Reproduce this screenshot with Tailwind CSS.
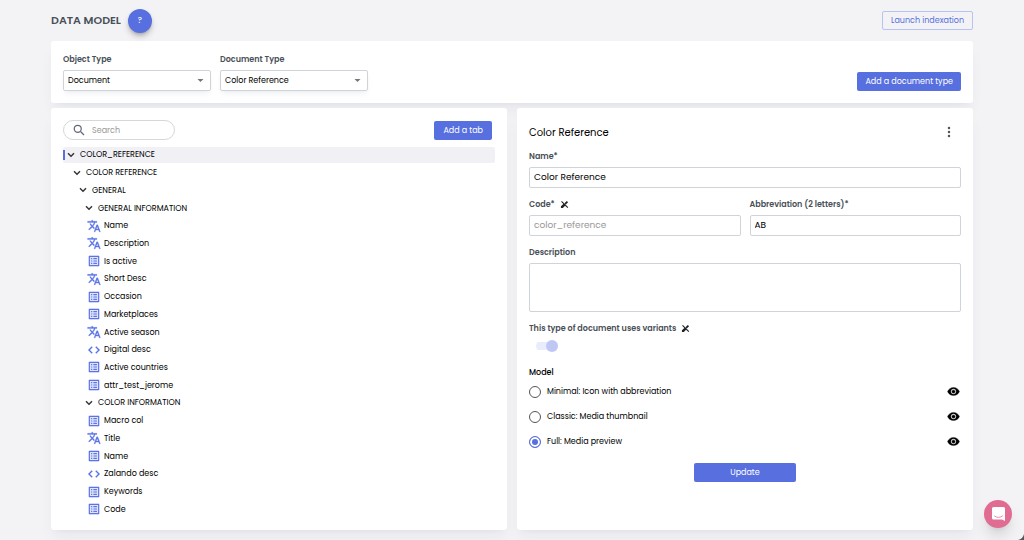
<!DOCTYPE html>
<html lang="en">

<head>
    <meta charset="UTF-8">
    <meta name="viewport" content="width=device-width, initial-scale=1.0">
    <script src="https://cdn.jsdelivr.net/npm/@tailwindcss/browser@4"></script>
    <title>Data Model</title>
</head>

<body class="bg-[#f3f3f6] font-[Poppins,Inter,sans-serif] text-[8px] leading-[13px] font-normal text-black">
    <!-- icons -->
    <svg class="hidden">
        <symbol id="chevron" viewBox="0 0 24 24"><path d="M17 7.500 12 12.500 7 7.500 5 9.500l7 7 7-7z" /></symbol>
        <symbol id="text" viewBox="0 0 24 24"><path d="M12.87 15.07l-2.54-2.51.03-.03c1.74-1.94 2.98-4.17 3.71-6.53H17V4h-7V2H8v2H1v1.99h11.17C11.5 7.92 10.44 9.75 9 11.35 8.07 10.32 7.3 9.19 6.69 8h-2c.73 1.63 1.73 3.17 2.98 4.56l-5.09 5.02L4 19l5-5 3.11 3.11.76-2.04zM18.5 10h-2L12 22h2l1.12-3h4.75L21 22h2l-4.5-12zm-2.62 7l1.62-4.33L19.12 17h-3.24z" stroke="#5b73e6" stroke-width=".5" /></symbol>
        <symbol id="list" viewBox="0 0 24 24"><path d="M3 3h18v18H3z" fill="#dfe4fb" /><path d="M19 5v14H5V5h14m1.1-2H3.9c-.5 0-.9.4-.9.9v16.200c0 .4.4.9.9.9h16.200c.4 0 .9-.5.9-.9V3.900c0-.5-.5-.9-.9-.9zM11 7h6v2h-6V7zm0 4h6v2h-6v-2zm0 4h6v2h-6zM7 7h2v2H7zm0 4h2v2H7zm0 4h2v2H7z" /></symbol>
        <symbol id="code" viewBox="0 0 24 24"><path d="M9.400 16.600 4.800 12l4.600-4.600L8 6l-6 6 6 6 1.400-1.400zm5.200 0 4.600-4.600-4.600-4.600L16 6l6 6-6 6-1.400-1.400z" stroke="#5b73e6" stroke-width=".6" /></symbol>
        <symbol id="eye" viewBox="0 0 24 24"><path d="M12 4.500C7 4.500 2.730 7.610 1 12c1.730 4.390 6 7.500 11 7.500s9.270-3.110 11-7.500c-1.730-4.390-6-7.500-11-7.500zM12 17c-2.760 0-5-2.240-5-5s2.240-5 5-5 5 2.240 5 5-2.240 5-5 5zm0-8c-1.660 0-3 1.340-3 3s1.340 3 3 3 3-1.340 3-3-1.340-3-3-3z" stroke="#000" stroke-width=".6" /></symbol>
        <symbol id="locked" viewBox="0 0 24 24"><path d="M3 4.500 5 2.500 22 19.500 20 21.500l-6.500-6.500L7.500 21.500H2.500v-5l6.500-6zM18 2.500 21.500 6l-6 6-3.500-3.500z" /></symbol>
        <symbol id="caret" viewBox="0 0 24 24"><path d="m4 8 8 8 8-8z" /></symbol>
    </svg>

    <div class="flex min-h-screen flex-col px-[51px] pb-[10px]">
        <header class="flex h-[41px] items-center justify-between">
            <div class="flex items-center gap-[7px]">
                <h1 class="text-[11px] font-semibold text-[#495057]">DATA MODEL</h1>
                <button type="button" class="size-6 rounded-full bg-[#576fdf] font-medium text-white shadow-md shadow-black/25">?</button>
            </div>
            <button type="button" class="h-[19px] rounded-[2px] border border-[#b7c2f5] px-2 text-[#576fdf]">Launch indexation</button>
        </header>

        <main class="flex flex-1 flex-col gap-[5px]">
            <section class="flex items-end justify-between rounded-[3px] bg-white p-3 shadow-lg shadow-[#12264c]/5">
                <div class="flex gap-[9px]">
                    <div class="w-[148px]">
                        <label for="objectType" class="mb-[4px] block font-semibold text-[#495057]">Object Type</label>
                        <div class="relative">
                            <select id="objectType" class="block h-[21px] w-full appearance-none rounded-[2px] border border-[#ced4da] px-1 shadow-md shadow-[#12264c]/5">
                                <option>Document</option>
                            </select>
                            <svg class="pointer-events-none absolute top-[6px] right-[6px] size-[9px] fill-[#777]"><use href="#caret" /></svg>
                        </div>
                    </div>
                    <div class="w-[148px]">
                        <label for="documentType" class="mb-[4px] block font-semibold text-[#495057]">Document Type</label>
                        <div class="relative">
                            <select id="documentType" class="block h-[21px] w-full appearance-none rounded-[2px] border border-[#ced4da] px-1 shadow-md shadow-[#12264c]/5">
                                <option>Color Reference</option>
                            </select>
                            <svg class="pointer-events-none absolute top-[6px] right-[6px] size-[9px] fill-[#777]"><use href="#caret" /></svg>
                        </div>
                    </div>
                </div>
                <button type="button" class="h-[19px] rounded-[2px] bg-[#576fdf] px-2 text-white">Add a document type</button>
            </section>

            <div class="grid flex-1 grid-cols-2 gap-[10px]">
                <section class="flex flex-col rounded-[3px] bg-white p-3 shadow-lg shadow-[#12264c]/5">
                    <div class="mb-[6px] flex items-center justify-between pr-[3px]">
                        <label for="search" class="flex h-5 w-[112px] items-center gap-[7px] rounded-full border border-[#d5d7dc] pl-[9px]">
                            <svg viewBox="0 0 24 24" class="size-3 shrink-0 fill-none stroke-[#626879] stroke-[2.500]"><circle cx="9.500" cy="9.500" r="7" /><path d="m15 15 7 7" /></svg>
                            <input id="search" type="text" placeholder="Search" aria-label="Search" class="w-full outline-none placeholder:text-[#999]">
                        </label>
                        <button type="button" class="h-[19px] rounded-[2px] bg-[#576fdf] px-[9px] text-white">Add a tab</button>
                    </div>
                    <ul id="tree" class="flex flex-1 flex-col"></ul>
                </section>

                <section class="rounded-[3px] bg-white p-3 shadow-lg shadow-[#12264c]/5">
                    <form>
                        <div class="flex h-6 items-center justify-between pr-[7px]">
                            <h2 class="text-[10px]">Color Reference</h2>
                            <button type="button" aria-label="More">
                                <svg viewBox="0 0 10 24" class="h-3 w-[10px] fill-[#555]"><circle cx="5" cy="4" r="2.500" /><circle cx="5" cy="12" r="2.500" /><circle cx="5" cy="20" r="2.500" /></svg>
                            </button>
                        </div>

                        <label for="name" class="mt-[6px] mb-[4px] block font-semibold text-[#495057]">Name*</label>
                        <input type="text" id="name" value="Color Reference" class="block h-[21px] w-full rounded-[2px] border border-[#ced4da] px-1 text-[9px]">

                        <div class="mt-[10px] grid grid-cols-2 gap-[9px]">
                            <div>
                                <label for="code" class="mb-[4px] flex items-center gap-[5px] font-semibold text-[#495057]">Code*
                                    <svg class="size-[9px] fill-[#222]"><use href="#locked" /></svg></label>
                                <input type="text" id="code" value="color_reference" disabled class="block h-[21px] w-full rounded-[2px] border border-[#ced4da] px-1 text-[9px] text-[#999]">
                            </div>
                            <div>
                                <label for="abbr" class="mb-[4px] block font-semibold text-[#495057]">Abbreviation (2 letters)*</label>
                                <input type="text" id="abbr" value="AB" class="block h-[21px] w-full rounded-[2px] border border-[#ced4da] px-1 text-[9px]">
                            </div>
                        </div>

                        <label for="description" class="mt-[10px] mb-[4px] block font-semibold text-[#495057]">Description</label>
                        <textarea id="description" class="block h-[49px] w-full resize-none rounded-[2px] border border-[#ced4da] px-1 text-[9px]"></textarea>

                        <label for="variants" class="mt-[10px] flex items-center gap-[5px] font-semibold text-[#495057]">This type of document uses variants
                            <svg class="size-[9px] fill-[#222]"><use href="#locked" /></svg></label>
                        <input type="checkbox" id="variants" checked disabled class="mt-[5px] ml-[7px] flex h-3 w-[22px] appearance-none items-center justify-end rounded-full bg-linear-to-r from-[#e9ecfb] to-[#e9ecfb] bg-[length:100%_8px] bg-center bg-no-repeat before:size-3 before:rounded-full before:bg-[#bfc8f4]">

                        <fieldset class="mt-[14px]">
                            <legend class="mb-[6px] font-medium">Model</legend>
                            <div class="flex flex-col gap-3">
                                <div class="flex items-center gap-[6px]">
                                    <input type="radio" id="minimal" name="model" class="size-3 appearance-none rounded-full border border-[#555] checked:border-[#576fdf] checked:bg-[#576fdf] checked:inset-ring-2 checked:inset-ring-white">
                                    <label for="minimal" class="flex-1">Minimal: Icon with abbreviation</label>
                                    <button type="button" aria-label="Preview minimal"><svg class="mr-[1px] block size-[13px] fill-black"><use href="#eye" /></svg></button>
                                </div>
                                <div class="flex items-center gap-[6px]">
                                    <input type="radio" id="classic" name="model" class="size-3 appearance-none rounded-full border border-[#555] checked:border-[#576fdf] checked:bg-[#576fdf] checked:inset-ring-2 checked:inset-ring-white">
                                    <label for="classic" class="flex-1">Classic: Media thumbnail</label>
                                    <button type="button" aria-label="Preview classic"><svg class="mr-[1px] block size-[13px] fill-black"><use href="#eye" /></svg></button>
                                </div>
                                <div class="flex items-center gap-[6px]">
                                    <input type="radio" id="full" name="model" checked class="size-3 appearance-none rounded-full border border-[#555] checked:border-[#576fdf] checked:bg-[#576fdf] checked:inset-ring-2 checked:inset-ring-white">
                                    <label for="full" class="flex-1">Full: Media preview</label>
                                    <button type="button" aria-label="Preview full"><svg class="mr-[1px] block size-[13px] fill-black"><use href="#eye" /></svg></button>
                                </div>
                            </div>
                        </fieldset>

                        <button type="submit" class="mx-auto mt-[15px] block h-[19px] w-[102px] rounded-[2px] bg-[#576fdf] text-white">Update</button>
                    </form>
                </section>
            </div>
        </main>
    </div>

    <!-- chat launcher -->
    <button type="button" aria-label="Open chat" class="fixed right-3 bottom-3 flex size-7 items-center justify-center rounded-full bg-[#e06c92] shadow-lg shadow-black/15">
        <svg viewBox="0 0 26 28" class="h-[14px] w-[13px]"><path d="M3 0h20q3 0 3 3v25l-6-3H3q-3 0-3-3V3q0-3 3-3z" fill="#fff" /><path d="M5 18q8 6 16 0" fill="none" stroke="#e06c92" stroke-width="1.500" stroke-linecap="round" /></svg>
    </button>
    <svg viewBox="0 0 6 6" class="fixed right-0 bottom-0 size-[6px]"><path d="M6 0v6H0q5-1 6-6z" fill="#555" /></svg>

    <script>
        const tree = [
            ['group', 0, 'COLOR_REFERENCE'],
            ['group', 1, 'COLOR REFERENCE'],
            ['group', 2, 'GENERAL'],
            ['group', 3, 'GENERAL INFORMATION'],
            ['text', 4, 'Name'],
            ['text', 4, 'Description'],
            ['list', 4, 'Is active'],
            ['text', 4, 'Short Desc'],
            ['list', 4, 'Occasion'],
            ['list', 4, 'Marketplaces'],
            ['text', 4, 'Active season'],
            ['code', 4, 'Digital desc'],
            ['list', 4, 'Active countries'],
            ['list', 4, 'attr_test_jerome'],
            ['group', 3, 'COLOR INFORMATION'],
            ['list', 4, 'Macro col'],
            ['text', 4, 'Title'],
            ['list', 4, 'Name'],
            ['code', 4, 'Zalando desc'],
            ['list', 4, 'Keywords'],
            ['list', 4, 'Code'],
        ];
        const indent = ['pl-0', 'pl-[6px]', 'pl-[12px]', 'pl-[18px]', 'pl-[22px]'];

        document.getElementById('tree').innerHTML = tree.map(([type, level, label], index) => {
            const selected = index === 0;
            const icon = type === 'group'
                ? `<button type="button" aria-label="Toggle ${label}"><svg class="block size-3 fill-[#333]"><use href="#chevron" /></svg></button>`
                : `<svg class="size-[14px] fill-[#5b73e6]"><use href="#${type}" /></svg>`;
            return `
            <li class="flex flex-1 items-center">
                <div class="flex h-4 w-full items-center ${selected ? 'rounded-[2px] bg-[#f0f0f5]' : ''}">
                    <span class="h-[10px] w-[2px] ${selected ? 'bg-[#576fdf]' : ''}"></span>
                    <div class="flex items-center gap-[3px] ${indent[level]}">${icon}<span>${label}</span></div>
                </div>
            </li>`;
        }).join('');
    </script>
</body>

</html>
